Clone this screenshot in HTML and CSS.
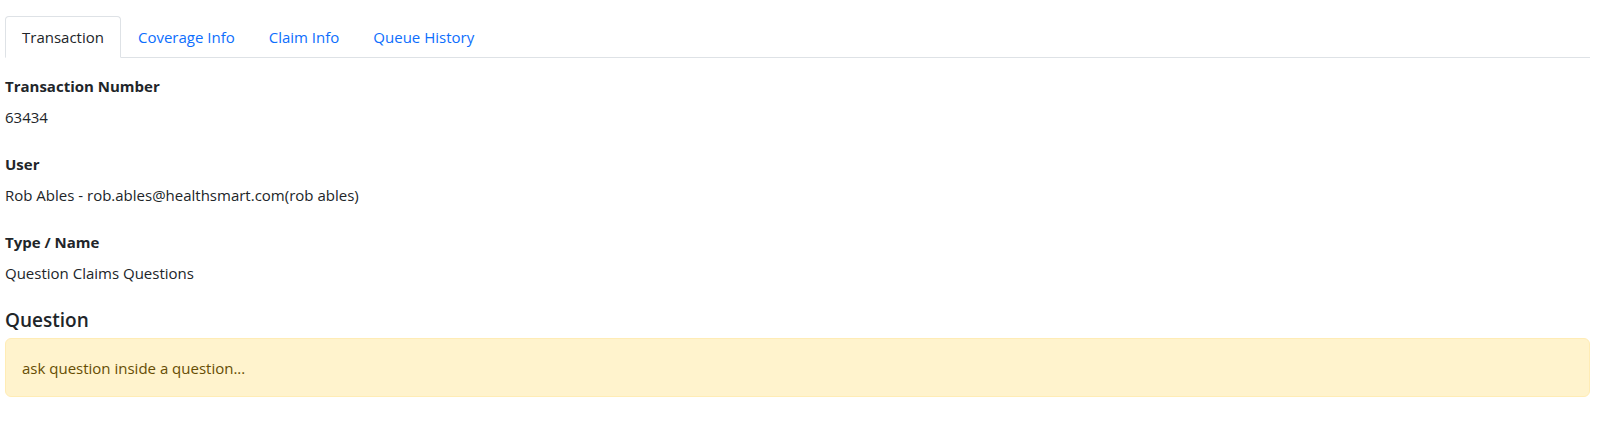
FILE: index.html
```html
<!DOCTYPE html>
<html>
<head>
  <meta charset="utf-8">
  <title>Transaction</title>
  <link rel="stylesheet" href="styles.css">
</head>
<body>
  <div class="page">
    <ul class="tabs">
      <li><a class="tab active">Transaction</a></li>
      <li><a class="tab">Coverage Info</a></li>
      <li><a class="tab">Claim Info</a></li>
      <li><a class="tab">Queue History</a></li>
    </ul>

    <div class="tab-body">
      <div class="field">
        <div class="label">Transaction Number</div>
        <div class="value">63434</div>
      </div>
      <div class="field">
        <div class="label">User</div>
        <div class="value">Rob Ables - rob.ables@healthsmart.com(rob ables)</div>
      </div>
      <div class="field">
        <div class="label">Type / Name</div>
        <div class="value">Question Claims Questions</div>
      </div>

      <h5 class="section-title">Question</h5>
      <div class="alert">ask question inside a question...</div>
    </div>
  </div>
</body>
</html>
```

FILE: styles.css
```css
html, body {
  margin: 0;
}
body {
  background: #fff;
  color: #212529;
  font-family: "Open Sans", "Noto Sans", sans-serif;
  font-size: 15px;
  line-height: 24px;
}
.page {
  padding: 16px 11px 0 5px;
}
.tabs {
  display: flex;
  list-style: none;
  margin: 0;
  padding: 0;
  border-bottom: 1px solid #dee2e6;
}
.tab {
  display: block;
  padding: 8px 16px;
  margin-bottom: -1px;
  border: 1px solid transparent;
  border-radius: 4px 4px 0 0;
  color: #0d6efd;
  font-size: 15px;
  cursor: pointer;
}
.tab.active {
  color: #212529;
  background: #fff;
  border-color: #dee2e6 #dee2e6 #fff;
}
.tab-body {
  padding-top: 16px;
}
.field {
  margin-bottom: 23px;
}
.label {
  font-weight: 700;
  margin-bottom: 7px;
}
.section-title {
  margin: 3px 0 6px;
  font-size: 19px;
  font-weight: 600;
  line-height: 24px;
}
.alert {
  padding: 17px 16px 16px;
  background: #fff3cd;
  border: 1px solid #ffecb5;
  border-radius: 6px;
  color: #664d03;
}
```
